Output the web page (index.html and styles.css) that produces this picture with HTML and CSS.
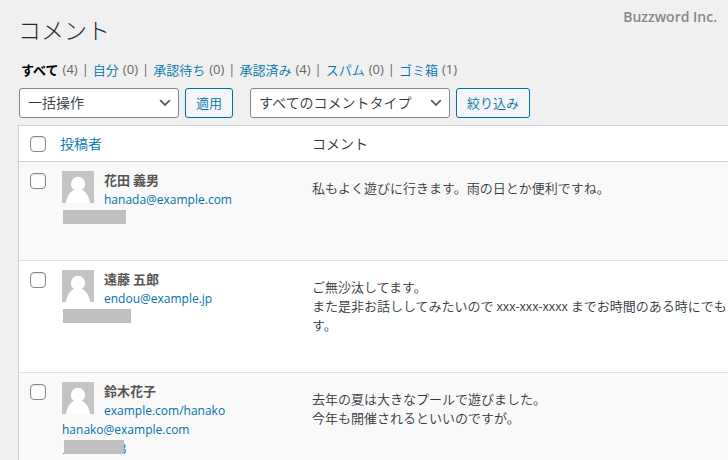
FILE: index.html
```html
<!DOCTYPE html>
<html lang="ja">
<head>
    <meta charset="UTF-8">
    <meta name="viewport" content="width=device-width, initial-scale=1.0">
    <title>コメント</title>
    <link rel="stylesheet" href="styles.css">
</head>
<body>
    <svg class="sprite" aria-hidden="true">
        <symbol id="avatar" viewBox="0 0 32 32">
            <rect width="32" height="32" fill="#c4c4c4"/>
            <circle cx="16" cy="13" r="7.2" fill="#fff"/>
            <path d="M4 32C5 25 8 20.500 12 19h8c4 1.500 7 6 8 13z" fill="#fff"/>
        </symbol>
    </svg>

    <header class="header">
        <h1>コメント</h1>
        <span class="brand">Buzzword Inc.</span>
    </header>

    <main class="content">
        <ul class="filters">
            <li><a href="#" class="current">すべて</a><span>(4)</span></li>
            <li><a href="#">自分</a><span>(0)</span></li>
            <li><a href="#">承認待ち</a><span>(0)</span></li>
            <li><a href="#">承認済み</a><span>(4)</span></li>
            <li><a href="#">スパム</a><span>(0)</span></li>
            <li><a href="#">ゴミ箱</a><span>(1)</span></li>
        </ul>

        <form class="toolbar">
            <div class="group">
                <select class="bulk" aria-label="一括操作">
                    <option>一括操作</option>
                </select>
                <button type="button">適用</button>
            </div>
            <div class="group">
                <select class="type" aria-label="コメントタイプ">
                    <option>すべてのコメントタイプ</option>
                </select>
                <button type="button">絞り込み</button>
            </div>
        </form>

        <table class="comments">
            <thead>
                <tr>
                    <th class="check"><input type="checkbox" aria-label="すべて選択"></th>
                    <th class="author"><a href="#">投稿者</a></th>
                    <th class="comment">コメント</th>
                </tr>
            </thead>
            <tbody>
                <tr>
                    <td class="check"><input type="checkbox" aria-label="花田 義男"></td>
                    <td class="author">
                        <svg class="avatar"><use href="#avatar"/></svg>
                        <strong>花田 義男</strong>
                        <a href="#">hanada@example.com</a>
                        <div class="ip"><span class="mask"></span></div>
                    </td>
                    <td class="comment"><p>私もよく遊びに行きます。雨の日とか便利ですね。</p></td>
                </tr>
                <tr>
                    <td class="check"><input type="checkbox" aria-label="遠藤 五郎"></td>
                    <td class="author">
                        <svg class="avatar"><use href="#avatar"/></svg>
                        <strong>遠藤 五郎</strong>
                        <a href="#">endou@example.jp</a>
                        <div class="ip"><span class="mask wide"></span></div>
                    </td>
                    <td class="comment"><p>ご無沙汰してます。<br>また是非お話ししてみたいので xxx-xxx-xxxx までお時間のある時にでも<br>す。</p></td>
                </tr>
                <tr>
                    <td class="check"><input type="checkbox" aria-label="鈴木花子"></td>
                    <td class="author">
                        <svg class="avatar"><use href="#avatar"/></svg>
                        <strong>鈴木花子</strong>
                        <a href="#">example.com/hanako</a>
                        <a href="#" class="email">hanako@example.com</a>
                        <div class="ip"><span>1</span><span class="mask over"></span><span>3</span></div>
                    </td>
                    <td class="comment"><p>去年の夏は大きなプールで遊びました。<br>今年も開催されるといいのですが。</p></td>
                </tr>
            </tbody>
        </table>
    </main>
</body>
</html>
```
FILE: styles.css
```css
html {
    overflow: hidden;
}

body {
    margin: 0;
    background-color: #f0f0f0;
    color: #32373c;
    font-family: "Noto Sans CJK JP", sans-serif;
    font-size: 13px;
    font-weight: 350;
    line-height: 19px;
}

.sprite {
    display: none;
}

a {
    color: #0073aa;
    text-decoration: none;
}

a:hover {
    color: #006799;
}

.header {
    display: flex;
    justify-content: space-between;
    align-items: flex-start;
    padding: 7px 11px 0 18px;
}

.header h1 {
    margin: 7px 0 0;
    color: #23282d;
    font-size: 23px;
    font-weight: 300;
    line-height: 30px;
}

.brand {
    color: #888;
    font-family: "Open Sans", sans-serif;
    font-size: 14px;
    font-weight: 600;
}

.content {
    padding-left: 18px;
}

.filters {
    display: flex;
    gap: 4px;
    margin: 0;
    padding: 16px 3px 9px;
    list-style: none;
    white-space: nowrap;
}

.filters li {
    display: flex;
    gap: 4px;
    color: #666;
}

.filters li span,
.filters li::after {
    font-family: "Open Sans", sans-serif;
    font-weight: 400;
}

.filters li:not(:last-child)::after {
    content: "|";
}

.filters .current {
    color: #000;
    font-weight: 600;
}

.toolbar {
    display: flex;
    gap: 17px;
    padding: 0 1px 7px;
}

.group {
    display: flex;
    gap: 6px;
}

select,
button {
    box-sizing: border-box;
    height: 30px;
    margin: 0;
    border-radius: 3px;
    font-family: inherit;
    font-weight: inherit;
}

select {
    appearance: none;
    padding: 0 24px 2px 8px;
    border: 1px solid #7e8993;
    background: #fff url("data:image/svg+xml,%3Csvg xmlns='http://www.w3.org/2000/svg' viewBox='0 0 20 20'%3E%3Cpath d='M5 6l5 5 5-5 2 1-7 7-7-7 2-1z' fill='%23555'/%3E%3C/svg%3E") no-repeat right 5px center / 16px 16px;
    color: #32373c;
    font-size: 14px;
}

.bulk {
    width: 160px;
}

.type {
    width: 200px;
}

button {
    padding: 0 10px 2px;
    border: 1px solid #0071a1;
    background: #f3f5f6;
    color: #0071a1;
    font-size: 13px;
    white-space: nowrap;
}

.comments {
    width: 100%;
    border: 1px solid #ccd0d4;
    border-right: 0;
    border-spacing: 0;
    background: #fff;
    table-layout: fixed;
}

.comments th,
.comments td {
    padding: 8px 10px;
    text-align: left;
    vertical-align: top;
}

.comments th {
    border-bottom: 1px solid #ccd0d4;
    font-size: 14px;
    font-weight: inherit;
}

.comments .check {
    width: 22px;
    padding-right: 0;
    padding-left: 11px;
}

.comments .author {
    width: 232px;
    padding-left: 8px;
}

.comments td.author {
    padding-bottom: 32px;
    padding-left: 10px;
}

.comments td.comment {
    padding-right: 0;
    padding-bottom: 38px;
    white-space: nowrap;
}

tbody tr:nth-child(odd) {
    background: #f9f9f9;
}

tbody tr + tr td {
    border-top: 1px solid #e1e1e1;
}

.check input {
    appearance: none;
    display: block;
    box-sizing: border-box;
    width: 16px;
    height: 16px;
    margin: 2px 0 1px;
    border: 1px solid #7e8993;
    border-radius: 4px;
    background: #fff;
    box-shadow: inset 0 1px 2px rgba(0, 0, 0, 0.1);
}

td.check input {
    margin-top: 3px;
}

.avatar {
    float: left;
    width: 32px;
    height: 32px;
    margin: 1px 10px 0 0;
}

.author strong,
td.author a {
    display: block;
}

.author strong {
    color: #555;
    font-weight: 600;
    line-height: 20px;
}

td.author a {
    font-family: "Open Sans", sans-serif;
    font-size: 12px;
    font-weight: 400;
}

.author .email {
    clear: left;
}

.comment p {
    margin: 8px 0 0;
}

/* hidden IP address */
.ip {
    display: flex;
    align-items: flex-start;
    clear: left;
    height: 19px;
    color: #0073aa;
}

.mask {
    width: 63px;
    height: 14px;
    margin: 1px 0 0 1px;
    background: #bfbfbf;
}

.mask.wide {
    width: 68px;
}

.mask.over {
    z-index: 1;
    width: 60px;
    margin: 1px -5px 0;
}
```
